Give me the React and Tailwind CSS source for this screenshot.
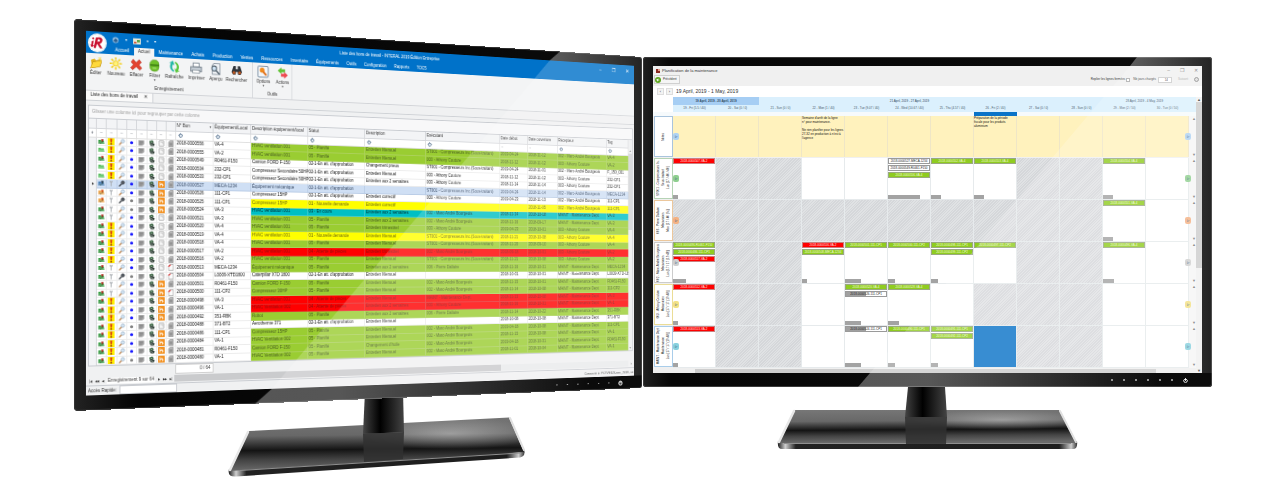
import React from "react";

/* ---------- perspective helper ---------- */

// Homography that maps a w×h box onto four corners (tl, tr, br, bl).
function quadTransform(w, h, [p0, p1, p2, p3]) {
  const [x0, y0] = p0, [x1, y1] = p1, [x2, y2] = p2, [x3, y3] = p3;
  const sx = x0 - x1 + x2 - x3, sy = y0 - y1 + y2 - y3;
  const dx1 = x1 - x2, dx2 = x3 - x2, dy1 = y1 - y2, dy2 = y3 - y2;
  const den = dx1 * dy2 - dx2 * dy1;
  const g = (sx * dy2 - dx2 * sy) / den;
  const k = (dx1 * sy - sx * dy1) / den;
  const a = x1 - x0 + g * x1, b = x3 - x0 + k * x3;
  const d = y1 - y0 + g * y1, e = y3 - y0 + k * y3;
  return `matrix3d(${[a / w, d / w, 0, g / w, b / h, e / h, 0, k / h, 0, 0, 1, 0, x0, y0, 0, 1].join(",")})`;
}

/* ---------- work order data ---------- */

const HV1 = "HVAC ventilation 001", HV2 = "HVAC Ventilation 002";
const P = "05 - Planifié", AP = "02-1-En att. d'approbation", ND = "01 - Nouvelle demande", AT = "04 - Attente de pièces";
const EM = "Entretien Mensuel", E2 = "Entretien aux 2 semaines", ET = "Entretien trimestriel", EC = "Entretien correctif";
const ST = "ST001 - Compresseurs Inc.(Sous-traitant)", MB = "002 - Marc-André Bourgeois", AC = "003 - Athony Couture";
const PD = "006 - Pierre Dallaire", MD = "MAINT - Maintenance Dept.";

// last field: one letter each for box, priority, search, dot, feed and file icons
const ROWS = [
  ["556", "VA-4", "g", HV1, P, EM, ST, "2019-04-24", "2018-11-12", MB, "VA-4", "r!mb--"],
  ["555", "VA-2", "g", HV1, P, EM, AC, "2018-11-12", "2018-11-12", AC, "VA-2", "f!mb--"],
  ["549", "R0461-F150", "w", "Camion FORD F-150", AP, "Changement pneus", ST, "2019-04-24", "2018-11-01", MB, "F_150_001", "r!mb--"],
  ["534", "232-CP1", "w", "Compresseur Secondaire 50HP", AP, EM, AC, "2018-11-12", "2018-11-12", AC, "232-CP1", "f!mb--"],
  ["533", "232-CP1", "w", "Compresseur Secondaire 50HP", AP, E2, AC, "2018-11-14", "2018-11-14", AC, "232-CP1", "f!mb--"],
  ["527", "MECA-1234", "s", "Équipement mécanique", AP, "", ST, "2019-04-24", "2018-11-14", MB, "MECA-1234", "btwbo-"],
  ["526", "111-CP1", "w", "Compresseur 15HP", AP, EC, AC, "2019-04-23", "2018-11-13", MB, "111-CP1", "otmbo-"],
  ["525", "111-CP1", "y", "Compresseur 15HP", ND, EC, "", "", "2018-11-05", MB, "111-CP1", "otwgo-"],
  ["524", "VA-3", "c", HV1, "03 - En cours", E2, MB, "2018-11-14", "2018-10-18", MD, "VA-3", "rtmgo-"],
  ["521", "VA-3", "g", HV1, P, E2, MB, "2018-11-16", "2018-09-17", MD, "VA-3", "rtmb--"],
  ["520", "VA-4", "g", HV1, P, ET, AC, "2019-04-23", "2018-10-01", AC, "VA-4", "r!mb--"],
  ["519", "VA-4", "y", HV1, ND, EM, ST, "2018-11-21", "2018-10-08", AC, "VA-4", "r!mb--"],
  ["518", "VA-4", "g", HV1, P, EM, ST, "2018-11-20", "2018-09-10", AC, "VA-4", "r!mb--"],
  ["517", "VA-2", "r", HV1, AT, ET, MB, "2018-09-18", "2018-10-01", AC, "VA-2", "r!mb--"],
  ["516", "VA-2", "g", HV1, P, EM, ST, "2018-11-21", "2018-10-08", AC, "VA-2", "r!mb--"],
  ["513", "MECA-1234", "g", "Équipement mécanique", P, E2, PD, "2018-11-16", "2018-10-31", MD, "MECA-1234", "rtmb-x"],
  ["504", "L0009-XTD1800", "w", "Caterpillar XTD 1800", AP, EM, "", "2018-10-01", "2018-10-01", MD, "L0009-XTD-18", "rtwg-x"],
  ["501", "R0461-F150", "g", "Camion FORD F-150", P, EM, MB, "2018-11-15", "2018-10-01", MD, "R0461-F150", "rtmbo-"],
  ["500", "111-CP2", "g", "Compresseur 30HP", P, EM, MB, "2018-11-14", "2018-10-08", MD, "111-CP2", "rtmbox"],
  ["498", "VA-3", "r", HV1, AT, EM, MD, "2018-11-13", "2018-10-08", MD, "VA-3", "r!mbo-"],
  ["496", "VA-1", "r", HV2, AT, E2, AC, "2018-11-16", "2018-10-31", MD, "VA-1", "r!mbo-"],
  ["492", "351-RBK", "g", "Robot", P, E2, PD, "2018-11-14", "2018-10-22", MD, "351-RBK", "r!mbo-"],
  ["488", "371-BT2", "w", "Aerotherme 371", AP, EM, "", "2018-10-08", "2018-10-08", MD, "371-BT2", "r!mg--"],
  ["486", "111-CP1", "g", "Compresseur 15HP", P, EM, MB, "2019-04-18", "2018-10-08", MD, "111-CP1", "r!mbo-"],
  ["484", "VA-1", "g", HV2, P, EM, MB, "2018-11-15", "2018-10-08", MD, "VA-1", "r!mbo-"],
  ["481", "R0461-F150", "g", "Camion FORD F-150", P, "Changement d'huile", MB, "2019-04-18", "2018-10-31", MD, "R0461-F150", "r!mbo-"],
  ["480", "VA-1", "g", HV2, P, EM, MB, "2018-11-01", "2018-10-04", MD, "VA-1", "r!mgo-"],
];

const TONE = {
  g: "bg-[#9acd32] text-[#4a5f22] border-[#abd15a]",
  w: "bg-white text-[#111111] border-[#ececec]",
  s: "bg-[#cfdff4] text-[#3a4c66] border-[#b9cce6]",
  y: "bg-[#ffff00] text-[#6d6a10] border-[#f2ee4a]",
  c: "bg-[#00bfc4] text-[#022a2c] border-[#40cbce]",
  r: "bg-[#ff0000] text-[#8f0d0d] border-[#e82a2a]",
};

const COLS = [15, 20, 21, 21, 20, 21, 20, 20, 20, 81, 82, 127, 133, 146, 185, 72, 78, 133, 60];
const HEADS = ["N° Bon", "Équipement/Local", "Description équipement/local", "Statut", "Description", "Exécutant", "Date début", "Date ouverture", "Récepteur", "Tag"];

/* ---------- grid icons ---------- */

const ICON = "mx-auto block size-[14px]";

function BoxIcon({ kind }) {
  const fill = { r: "#2f9a3c", f: "#4dbb55", b: "#3f78b4", o: "#f0a040" }[kind];
  return (
    <svg viewBox="0 0 14 14" className={ICON}>
      <path d="M1 4h4l1 1h6l1 7H1z" fill={fill} />
      <path d="M2 7h11l-1 5H2z" fill="#ffffff" opacity="0.28" />
      {kind !== "f" && <path d="M7 2l5 1-3 5-2-2z" fill={kind === "o" ? "#d9480f" : kind === "b" ? "#23364a" : "#b02418"} />}
      {kind !== "f" && <path d="M3 9l3 2 5-5" stroke="#123c18" strokeWidth="1.4" fill="none" opacity="0.7" />}
    </svg>
  );
}
function PriorityIcon({ kind }) {
  if (kind === "!")
    return (
      <svg viewBox="0 0 14 14" className={ICON}>
        <rect width="14" height="14" fill="#ffee00" />
        <path d="M5 1h4l-1 8H6z" fill="#d01818" />
        <circle cx="7" cy="11.5" r="1.7" fill="#7d1010" />
      </svg>
    );
  return (
    <svg viewBox="0 0 14 14" className={ICON}>
      <path d="M4 1v3l2 2v7h2V6l2-2V1L8 3H6z" fill="#a9adb2" />
    </svg>
  );
}
function SearchIcon({ kind }) {
  return (
    <svg viewBox="0 0 14 14" className={ICON}>
      <path d="M2 12l4-4" stroke={kind === "w" ? "#3b4046" : "#b9824f"} strokeWidth="2.4" strokeLinecap="round" />
      <circle cx="9" cy="5" r="3.4" fill={kind === "w" ? "#555b62" : "#dcecf8"} stroke={kind === "w" ? "#3b4046" : "#7f9cb8"} strokeWidth="1.2" />
    </svg>
  );
}
function DotIcon({ kind }) {
  return (
    <svg viewBox="0 0 14 14" className={ICON}>
      <circle cx="7" cy="7.5" r="3.2" fill={kind === "b" ? "#1414ff" : "#808080"} />
    </svg>
  );
}
function NoteIcon() {
  return (
    <svg viewBox="0 0 14 14" className={ICON}>
      <path d="M1 2h12v8l-4 3H1z" fill="#a6a6a6" />
      <path d="M3 5h8M3 7.500h8M3 10h5" stroke="#707070" strokeWidth="1" />
    </svg>
  );
}
function GlobeIcon() {
  return (
    <svg viewBox="0 0 14 14" className={ICON}>
      <path d="M2 3l6-2 3 4-5 3-4-1z" fill="#24522d" />
      <path d="M2 8l6-2 5 3-2 4H5z" fill="#2c3a33" />
      <path d="M5 9l4 2M4 4l4 1" stroke="#e8f2e8" strokeWidth="1.3" />
    </svg>
  );
}
function FeedIcon({ kind }) {
  if (kind === "o")
    return (
      <svg viewBox="0 0 14 14" className={ICON}>
        <rect width="14" height="14" rx="1" fill="#f39222" />
        <path d="M4 3v8M4 7h5v4M7 4l4 5" stroke="#ffffff" strokeWidth="1.5" fill="none" />
      </svg>
    );
  return (
    <svg viewBox="0 0 14 14" className={ICON}>
      <rect x="2" y="1.500" width="10" height="11" rx="1" fill="#f6f6f6" stroke="#9a9a9a" strokeWidth="1.3" />
      <path d="M5 4.500h5v4" stroke="#aaaaaa" fill="none" />
    </svg>
  );
}
function FileIcon({ kind }) {
  return (
    <svg viewBox="0 0 14 14" className={ICON}>
      <path d="M2 4l3-3h7v12H2z" fill={kind === "x" ? "#fbfbfb" : "#b9b9b9"} stroke="#7c7c7c" />
      {kind === "x" ? <path d="M1 5l4-4 2 1-4 4z" fill="#e01010" /> : <path d="M4 6h6M4 8h6M4 10h6" stroke="#666666" />}
    </svg>
  );
}
function Clock() {
  return (
    <svg viewBox="0 0 12 12" className="block size-[11px]">
      <circle cx="6" cy="6" r="3.600" fill="#e9f1f8" stroke="#55708c" strokeWidth="1.6" />
      <path d="M6 0v3M6 9v3M0 6h3M9 6h3" stroke="#55708c" strokeWidth="1.2" />
    </svg>
  );
}

/* ---------- ribbon ---------- */

const RIBBON = {
  folder: <><path d="M2 7l7-2 3 3 9-3v14L4 23z" fill="#e2b31c" /><path d="M1 23l5-12 18-4-5 13z" fill="#ffd93b" stroke="#b68a10" /><path d="M15 3l7-2-1 6z" fill="#f6e27a" /></>,
  sun: <><circle cx="12" cy="12" r="5" fill="#fff27a" stroke="#f0c818" strokeWidth="1.5" /><path d="M12 0v5M12 19v5M0 12h5M19 12h5M3.500 3.500l3.500 3.500M17 17l3.500 3.500M3.500 20.500L7 17M17 7l3.500-3.500" stroke="#f4cf1c" strokeWidth="3" /></>,
  cross: <path d="M6 2l6 6 6-6 4 5-5 5 6 6-4 4-7-6-7 6-4-4 6-6-5-5z" fill="#e4432f" stroke="#b92b1d" />,
  filter: <><rect x="3" y="1" width="18" height="22" rx="8" fill="#6fbf2a" stroke="#4c931a" /><path d="M3 11h18" stroke="#3c7a12" strokeWidth="3" /><path d="M8 17h8" stroke="#b8e58c" strokeWidth="2" /></>,
  refresh: <><path d="M10 22C3 19 1 11 5 5L1 5l8-5 3 9-3-2c-3 5-2 10 3 13z" fill="#22b7a6" /><path d="M14 2c7 3 9 11 5 17l4 0-8 5-3-9 3 2c3-5 2-10-3-13z" fill="#5cc63c" /></>,
  printer: <><path d="M6 2h12v8H6z" fill="#ffffff" stroke="#667380" strokeWidth="1.5" /><path d="M1 10h22v9H1z" fill="#c4ccd4" stroke="#5f6b77" strokeWidth="1.5" /><path d="M5 16h14v6H5z" fill="#fafafa" stroke="#5f6b77" /></>,
  preview: <><path d="M8 1h13v22H5V5z" fill="#eef1f4" stroke="#7c8894" strokeWidth="1.5" /><circle cx="9" cy="11" r="5" fill="#cfe4f5" stroke="#56646f" strokeWidth="2" /><path d="M13 15l7 7" stroke="#56646f" strokeWidth="3" /></>,
  binoculars: <><path d="M5 4h5v6h4V4h5l4 12-3 5h-5l-2-6h-2l-2 6H4l-3-5z" fill="#30353b" /><circle cx="6" cy="17" r="3" fill="#c2571e" /><circle cx="18" cy="17" r="3" fill="#c2571e" /></>,
  options: <><rect x="1" y="1" width="22" height="22" rx="3" fill="#f4f7fa" stroke="#7f93a8" strokeWidth="2" /><circle cx="10" cy="9" r="5" fill="#f18a1d" /><path d="M12 12l7 7" stroke="#e0701a" strokeWidth="4" /></>,
  actions: <><path d="M1 8l8-7v4h8v6H9v4z" fill="#62c336" /><path d="M23 17l-8 7v-4H8v-6h7v-4z" fill="#ee4a50" /></>,
};

function RibbonButton({ icon, label, width, menu }) {
  return (
    <button type="button" className={`flex h-[56px] flex-col items-center pt-[6px] ${width}`}>
      <svg viewBox="0 0 24 24" className="block size-[25px]">{RIBBON[icon]}</svg>
      <span className="mt-[3px] block leading-[10px]">{label}</span>
      {menu && <span className="block text-[6px] leading-[8px]">▼</span>}
    </button>
  );
}

const TABS = ["Accueil", "Actuel", "Maintenance", "Achats", "Production", "Ventes", "Ressources", "Inventaire", "Équipements", "Outils", "Configuration", "Rapports", "TOC5"];

function WorkOrders() {
  return (
    <div className="flex h-full flex-col overflow-hidden bg-[#f0f1f2] text-[9px] leading-[12px] text-[#333333]">
      <div className="relative bg-[#0072c9] text-white">
        <div className="flex h-[28px] items-center pr-[14px]">
          <div className="flex flex-1 items-center gap-[12px] pl-[52px] text-[7px]">
            <svg viewBox="0 0 16 14" className="block h-[14px] w-[16px]"><circle cx="8" cy="7" r="6" fill="#9fc6e6" /><path d="M3 9l5-6 5 5-4 4z" fill="#2a5f90" /></svg>
            <span>▾</span>
            <svg viewBox="0 0 16 14" className="block h-[14px] w-[16px]"><rect y="1" width="16" height="12" fill="#e8e8d8" /><path d="M2 8h5v3H2z" fill="#d84a2a" /><path d="M8 4h6v5H8z" fill="#5da648" /></svg>
            <span>▾</span>
            <span>▾</span>
          </div>
          <h1 className="text-[9px]">Liste des bons de travail - INTERAL 2019 Édition Entreprise</h1>
          <div className="flex flex-1 justify-end gap-[28px] text-[11px]">
            <button type="button" aria-label="Réduire">–</button>
            <button type="button" aria-label="Restaurer">❐</button>
            <button type="button" aria-label="Fermer">✕</button>
          </div>
        </div>
        <nav className="flex h-[16px] pl-[50px]">
          {TABS.map((t) => (
            <a key={t} href="#" className={t === "Actuel" ? "bg-[#f4f5f6] px-[9px] leading-[16px] text-[#333333]" : "px-[9px] leading-[16px]"}>{t}</a>
          ))}
        </nav>
        <svg viewBox="0 0 36 36" className="absolute left-[3px] top-[3px] size-[38px]">
          <circle cx="18" cy="18" r="18" fill="#ffffff" />
          <circle cx="18" cy="18" r="16" fill="none" stroke="#e3e3e3" />
          <path d="M7 15l4-1-2 12H6zM10 8a2 2 0 110 4 2 2 0 010-4z" fill="#c8102e" />
          <path d="M15 8c10-3 15 1 12 7-1 3-4 4-5 4l6 9h-5l-6-9 1-3c6 0 8-5 1-5l-4 17h-4z" fill="#c8102e" />
          <path d="M5 22c5 5 9 1 15-6" stroke="#c8102e" strokeWidth="2" fill="none" />
        </svg>
      </div>

      <div className="flex h-[75px] border-b border-[#d2d4d8] bg-[#f3f4f5]">
        <div className="flex flex-col border-r border-[#dadcdf] pr-[8px]">
          <div className="flex">
            <RibbonButton icon="folder" label="Éditer" width="w-[40px]" />
            <RibbonButton icon="sun" label="Nouveau" width="w-[42px]" />
            <RibbonButton icon="cross" label="Effacer" width="w-[42px]" />
            <RibbonButton icon="filter" label="Filtrer" width="w-[34px]" menu />
            <RibbonButton icon="refresh" label="Rafraîche" width="w-[48px]" />
            <RibbonButton icon="printer" label="Imprimer" width="w-[46px]" />
            <RibbonButton icon="preview" label="Aperçu" width="w-[38px]" />
            <RibbonButton icon="binoculars" label="Rechercher" width="w-[52px]" />
          </div>
          <div className="pt-[4px] text-center">Enregistrement</div>
        </div>
        <div className="flex flex-col border-r border-[#dadcdf]">
          <div className="flex">
            <RibbonButton icon="options" label="Options" width="w-[46px]" menu />
            <RibbonButton icon="actions" label="Actions" width="w-[40px]" menu />
          </div>
          <div className="pt-[4px] text-center">Outils</div>
        </div>
      </div>

      <div className="flex h-[21px] border-b border-[#cfd2d6]">
        <div className="flex items-center gap-[12px] border-r border-[#cfd2d6] bg-[#fafafa] px-[9px] text-[#222222]">
          Liste des bons de travail
          <button type="button" aria-label="Fermer l'onglet">✕</button>
        </div>
      </div>

      <div className="mx-[4px] mt-[7px] flex h-[27px] items-center border border-b-0 border-[#c9ccd1] bg-[#f8f8f9] px-[6px] text-[#a0a0a0]">
        Glisser une colonne ici pour regrouper par cette colonne
      </div>

      <div className="mx-[4px] flex border border-[#c9ccd1] bg-white">
        <table className="w-[1275px] table-fixed border-collapse">
          <colgroup>
            {COLS.map((w, i) => <col key={i} style={{ width: w }} />)}
          </colgroup>
          <thead>
            <tr className="h-[18px] bg-[#f3f4f6]">
              {COLS.slice(0, 9).map((_, i) => <td key={i} className="border-b border-r border-[#d5d7db] p-0" />)}
              {HEADS.map((h, i) => (
                <th key={h} className="whitespace-nowrap border-b border-r border-[#d5d7db] px-[2px] py-0 text-left font-normal">
                  {i === 0 ? <span className="flex justify-between">{h}<span className="text-[6px]">▼</span></span> : h}
                </th>
              ))}
            </tr>
            <tr className="h-[18px] bg-white text-[#8a8f96]">
              {COLS.slice(0, 9).map((_, i) => (
                <td key={i} className="border-b border-r border-[#e0e0e0] p-0 text-center">{i === 0 ? "♦" : "–"}</td>
              ))}
              {HEADS.map((h) => (
                <td key={h} className="border-b border-r border-[#e0e0e0] px-[4px] py-0">{h.startsWith("Date") ? "–" : <Clock />}</td>
              ))}
            </tr>
          </thead>
          <tbody>
            {ROWS.map((r) => {
              const [no, eq, tone, ...rest] = r;
              const k = rest[8];
              const sel = tone === "s";
              const plain = sel ? TONE.s : TONE.w;
              const icons = [
                <BoxIcon kind={k[0]} />, <PriorityIcon kind={k[1]} />, <SearchIcon kind={k[2]} />, <DotIcon kind={k[3]} />,
                <NoteIcon />, <GlobeIcon />, <FeedIcon kind={k[4]} />, <FileIcon kind={k[5]} />,
              ];
              return (
                <tr key={no} className="h-[17px]">
                  <td className="border-r border-[#d5d7db] bg-[#f3f4f6] p-0 text-center text-[6px]">{sel ? "▶" : ""}</td>
                  {icons.map((ic, i) => <td key={i} className={`border-b border-r p-0 ${plain}`}>{ic}</td>)}
                  <td className={`whitespace-nowrap border-b border-r px-[2px] py-0 ${plain}`}>2018-0000{no}</td>
                  <td className={`whitespace-nowrap border-b border-r px-[2px] py-0 ${plain}`}>{eq}</td>
                  {rest.slice(0, 8).map((c, i) => (
                    <td key={i} className={`whitespace-nowrap border-b border-r px-[2px] py-0 ${TONE[tone]}`}>{c}</td>
                  ))}
                </tr>
              );
            })}
          </tbody>
        </table>
        <div className="flex flex-1 flex-col items-center bg-[#eeeff0] pt-[20px] text-[7px] text-[#777777]">
          ▲
          <span className="block h-[180px] w-full bg-[#d2d3d5]" />
          <span className="mt-auto">▼</span>
        </div>
      </div>

      <div className="flex h-[20px] pl-[184px]">
        <div className="w-[81px] border border-[#d0d0d0] bg-white px-[4px] text-right leading-[17px]">0 / 64</div>
      </div>
      <div className="flex h-[18px] items-center pl-[6px]">
        <div className="flex w-[176px] items-center justify-between pr-[4px] text-[6px]">
          <span>|◀</span><span>◀◀</span><span>◀</span>
          <span className="whitespace-nowrap bg-white px-[2px] text-[9px]">Enregistrement 9 sur 64</span>
          <span>▶</span><span>▶▶</span><span>▶|</span>
        </div>
        <div className="flex h-[14px] flex-1 bg-[#e9eaec]"><span className="block h-full w-[69%] bg-[#cacbcd]" /></div>
        <span className="w-[16px] text-center">›</span>
      </div>
      <div className="flex flex-1 items-center justify-between border-t border-[#c9ccd1]">
        <label className="flex items-center gap-[6px] whitespace-nowrap pl-[4px]">
          Accès Rapide:
          <input className="h-[17px] w-[120px] border border-[#c9ccd1] bg-white" />
        </label>
        <span className="pr-[2px] text-[8px]">Connecté à: PCTVEILS-ven_2018, se</span>
      </div>
    </div>
  );
}

/* ---------- planner ---------- */

const DAYS = ["19 - Fri (5.5 / 40)", "20 - Sat (0 / 0)", "21 - Sun (0 / 0)", "22 - Mon (1 / 40)", "23 - Tue (9.07 / 40)", "24 - Wed (10.67 / 40)", "25 - Thu (4.57 / 40)", "26 - Fri (2 / 40)", "27 - Sat (0 / 0)", "28 - Sun (0 / 0)", "29 - Mon (2 / 50)", "30 - Tue (0 / 50)"];

const LANES = [
  {
    name: ["ST001 - Compresseurs In..", "Sous-traitant", "Lun [17 / 40 / 40]"], box: "border-[#b5d3b5]", badge: "bg-[#8fcf8f]", off: [1, 2, 8, 9],
    cells: {
      0: { ev: [["r", "2018-0000507-VA-2"]], bar: "w-[5px]" },
      5: { ev: [["w", "2018-0000527-MECA-1234"], ["w", "2018-0000549-R0461-F150"], ["g", "2018-0000556-VA-4"]], bar: "w-[32px]" },
      6: { ev: [["g", "2018-0000552-VA-4"]], bar: "w-[10px]" },
      7: { ev: [["g", "2018-0000553-VA-4"]], bar: "w-[10px]" },
      10: { ev: [["g", "2018-0000554-VA-4"]], bar: "w-[10px]" },
    },
  },
  {
    name: ["006 - Pierre Dallaire", "Mécanicien", "Mon [17 / 40 (%)]"], box: "border-[#ecc79c]", badge: "bg-[#f4b183]", off: [0, 1, 2, 3, 4, 5, 6, 7, 8, 9],
    cells: { 10: { ev: [["g", "2018-0000551-VA-4"]], bar: "w-[10px]" } },
  },
  {
    name: ["002 - Marc-André Bourgeois", "Mécanicien", "Lun [17 / 17 (19.48)]"], box: "border-[#cccccc]", badge: "bg-[#cfcfcf]", off: [1, 2, 8, 9],
    cells: {
      0: { ev: [["g", "2018-0000486-R0461-F150"], ["g", "2018-0000486-111-CP1"], ["r", "2018-0000517-VA-2"]], bar: "w-[13px]" },
      3: { ev: [["r", "2018-0000516-VA-2"], ["g", "2018-0000508-MECA-1234"]], bar: "w-[5px]" },
      4: { ev: [["g", "2018-0000501-111-CP1"]], bar: "w-[16px]" },
      5: { ev: [["g", "2018-0000500-111-CP2"]], bar: "w-[7px]" },
      6: { ev: [["g", "2018-0000498-111-CP1"], ["g", "2018-0000499-111-CP2"]], bar: "w-[7px]" },
      7: { ev: [["g", "2018-0000497-111-CP2"]] },
      10: { ev: [["g", "2018-0000496-VA-4"]], bar: "w-[11px]" },
    },
  },
  {
    name: ["003 - Athony Couture", "Mécanicien", "Lun [17 / 17 (19.48)]"], box: "border-[#ebdd96]", badge: "bg-[#f3e184]", off: [1, 2, 7, 8, 9],
    cells: {
      0: { ev: [["r", "2018-0000512-VA-2"]], bar: "w-[5px]" },
      4: { ev: [["g", "2018-0000520-VA-4"], ["h", "2018-0000526-111-CP1"]], bar: "w-[16px]" },
      5: { ev: [["g", "2018-0000528-VA-4"]], bar: "w-[11px]" },
    },
  },
  {
    name: ["MAINT - Maintenance Dept", "Maintenance", "Lun [17 / 17 (19.48)]"], box: "border-[#a9cdea]", badge: "bg-[#87d0de]", off: [1, 2, 8, 9],
    cells: {
      0: { ev: [["r", "2018-0000513-VA-2"]], bar: "w-[5px]" },
      4: { ev: [["h", "2018-0000524-111-CP1"]], bar: "w-[16px]" },
      5: { ev: [["g", "2018-0000490-111-CP1"]], bar: "w-[7px]" },
      6: { ev: [["g", "2018-0000491-111-CP1"], ["g", "2018-0000492-111-CP2"]], bar: "w-[7px]" },
      7: { ev: [], solid: true },
    },
  },
];

const EVENT = {
  r: "border-[#c98080] bg-[#ff0000] text-[#ffe0e0]",
  g: "border-[#9aa880] bg-[#8fcc20] text-[#f0fbd8]",
  w: "border-[#9a9a9a] bg-white text-[#222222]",
  h: "border-[#9a9a9a] bg-linear-to-r from-[#a0a0a0] from-50% to-white to-50% text-[#222222]",
};

function Badge({ color, side }) {
  return (
    <span className={`absolute top-[17px] z-10 block h-[7px] w-[6px] rounded-[2px] text-center text-[5px] leading-[7px] text-[#4a6a8a] ${color} ${side}`}>▹</span>
  );
}

function Lane({ name, box, badge, children }) {
  return (
    <div className="flex h-[42px]">
      <div className={`mb-px ml-px flex w-[19px] items-center justify-center border bg-white ${box}`}>
        <div className="rotate-180 text-center text-[3px] leading-[5px] text-[#222222] [writing-mode:vertical-rl]">
          {name.map((n) => <div key={n} className="whitespace-nowrap">{n}</div>)}
        </div>
      </div>
      <div className="relative flex flex-1">
        <Badge color={badge} side="left-0" />
        <div className="grid flex-1 grid-cols-12">{children}</div>
        <Badge color={badge} side="-right-[2px]" />
      </div>
      <div className="flex w-[7px] flex-col items-end justify-between bg-[#f6f6f6] py-px text-[4px] leading-[4px] text-[#777777]"><span>▲</span><span>▼</span></div>
    </div>
  );
}

function Planner() {
  return (
    <div className="flex h-full flex-col overflow-hidden bg-[#f0f0f0] text-[3px] leading-[5px] text-[#333333]">
      <div className="flex h-[9px] items-center justify-between pl-[3px] pr-[4px]">
        <h2 className="flex items-center gap-[2px] text-[4px]">
          <svg viewBox="0 0 8 8" className="block size-[4px]"><path d="M0 0h8v8H0z" fill="#8a2a22" /><path d="M4 0h4v4H4z" fill="#e5a090" /></svg>
          Planification de la maintenance
        </h2>
        <div className="flex gap-[10px] text-[5px] text-[#777777]">
          <button type="button" aria-label="Réduire">–</button>
          <button type="button" aria-label="Restaurer">❐</button>
          <button type="button" aria-label="Fermer">✕</button>
        </div>
      </div>
      <div className="flex h-[11px] items-start justify-between pl-px pr-[3px]">
        <button type="button" className="flex h-[9px] items-center gap-[2px] border border-[#d0d0d0] bg-[#f5f5f5] pr-[2px]">
          <svg viewBox="0 0 10 10" className="block size-[6px]"><circle cx="5" cy="5" r="5" fill="#5da51f" /><path d="M7 5H3M5 3L3 5l2 2" stroke="#ffffff" strokeWidth="1.5" fill="none" /></svg>
          Précédent
        </button>
        <div className="flex h-[9px] items-center gap-[3px]">
          <label className="flex items-center gap-px">Replier les lignes fermées
            <input type="checkbox" className="block size-[4px] appearance-none border border-[#aaaaaa] bg-white" />
          </label>
          <label className="flex items-center gap-[2px]">Nb jours chargés
            <input defaultValue="14" className="block h-[6px] w-[14px] border border-[#cccccc] bg-white pr-[3px] text-right" />
          </label>
          <button type="button" className="ml-[3px] pr-[3px] text-[#aaaaaa]">Suivant</button>
          <svg viewBox="0 0 10 10" className="block size-[5px]"><circle cx="5" cy="5" r="4" fill="#dddddd" stroke="#777777" strokeWidth="1.5" /></svg>
        </div>
      </div>
      <div className="flex h-[11px] items-center bg-white pl-[4px] text-[5px] text-[#333333]">
        <button type="button" aria-label="Semaine précédente" className="block h-[7px] w-[7px] border border-[#dddddd] bg-[#f3f3f3] text-[4px] leading-[5px]">‹</button>
        <button type="button" aria-label="Semaine suivante" className="ml-[2px] block h-[7px] w-[7px] border border-[#dddddd] bg-[#f3f3f3] text-[4px] leading-[5px]">›</button>
        <span className="ml-[3px]">19 April, 2019 - 1 May, 2019</span>
      </div>
      <div className="flex flex-1">
        <div className="flex flex-1 flex-col">
          <div className="flex h-[15px]">
            <div className="w-[20px] bg-white" />
            <div className="flex flex-1 flex-col bg-[#dbf0fd]">
              <div className="grid h-[8px] grid-cols-12 text-center leading-[8px] text-[#33475b]">
                <div className="col-span-2 bg-[#a6cef4] font-bold">19 April, 2019 - 20 April, 2019</div>
                <div className="col-span-7">21 April, 2019 - 27 April, 2019</div>
                <div className="col-span-3 pl-[40px]">28 April, 2019 - 4 May, 2019</div>
              </div>
              <div className="grid grid-cols-12 text-center leading-[6px] text-[#4a5c6c]">
                {DAYS.map((d) => <div key={d} className="whitespace-nowrap">{d}</div>)}
              </div>
            </div>
            <div className="w-[7px] bg-[#dbf0fd]" />
          </div>
          <div className="flex h-[4px] bg-[#f6fafc] pl-[20px] pr-[7px]">
            <div className="grid flex-1 grid-cols-12"><div className="col-start-8 bg-[#0a73c8]" /></div>
          </div>
          <Lane name={["Notes"]} box="border-[#a9c4dd] bg-[#fff2bf]" badge="bg-[#aed2f2]">
            {DAYS.map((d, i) => (
              <div key={d} className="mb-px border-r border-[#efe6c6] bg-[#fff2bd] leading-[4px] text-[#111111]">
                {i === 3 && <p>Semaine d'arrêt de la ligne<br />n° pour maintenance.<br /><br />Ne rien planifier pour les lignes 27-32 en production à n'est à l'agence</p>}
                {i === 7 && <p>Préparation de la période fiscale pour les produits aluminium</p>}
              </div>
            ))}
          </Lane>
          {LANES.map((lane) => (
            <Lane key={lane.name[0]} {...lane}>
              {DAYS.map((d, i) => {
                const cell = lane.cells[i];
                const bg = cell?.solid
                  ? "bg-[#0a73c8]"
                  : lane.off.includes(i)
                    ? "bg-[repeating-linear-gradient(135deg,#d5d7da_0px,#d5d7da_1px,#e0e2e4_1px,#e0e2e4_2px)]"
                    : "bg-white";
                return (
                  <div key={d} className={`flex min-w-0 flex-col gap-px border-b border-r border-[#e6eaec] ${bg}`}>
                    {cell?.ev.map(([tone, text]) => (
                      <div key={text} className={`h-[6px] whitespace-nowrap border text-center leading-[4px] ${EVENT[tone]}`}>{text}</div>
                    ))}
                    {cell?.bar && <span className={`mt-auto block h-[4px] bg-[#a3a3a3] ${cell.bar}`} />}
                  </div>
                );
              })}
            </Lane>
          ))}
          <div className="flex h-[5px] items-center bg-[#efefef] pl-[42px] pr-[40px]">
            <span className="block h-[4px] flex-1 bg-[#cdcdcd]" />
          </div>
        </div>
        <div className="flex w-[6px] flex-col items-center bg-[#f0f0f0] text-[4px] leading-[5px]">
          ▲
          <span className="block h-[166px] w-full bg-[#cdcdcd]" />
          <span className="mt-auto">▼</span>
        </div>
      </div>
    </div>
  );
}

/* ---------- hardware ---------- */

function Stand({ id, className, viewBox, neck, mirror, top, shade, rim, left, right }) {
  return (
    <svg viewBox={viewBox} className={className} aria-hidden="true">
      <defs>
        <linearGradient id={`${id}-neck`} x1="0" x2="1" y1="0" y2="0">
          <stop offset="0" stopColor="#454545" /><stop offset="0.15" stopColor="#2a2a2a" />
          <stop offset="0.42" stopColor="#000000" /><stop offset="0.75" stopColor="#262626" /><stop offset="1" stopColor="#444444" />
        </linearGradient>
        <linearGradient id={`${id}-top`} x1="0" x2="0.06" y1="0" y2="1">
          <stop offset="0" stopColor="#777777" /><stop offset="0.35" stopColor="#686868" />
          <stop offset="0.62" stopColor="#141414" /><stop offset="0.8" stopColor="#444444" /><stop offset="1" stopColor="#6a6a6a" />
        </linearGradient>
        <radialGradient id={`${id}-glow`} cx="0.75" cy="0.3" r="0.3">
          <stop offset="0" stopColor="#ffffff" stopOpacity="0.35" /><stop offset="1" stopColor="#ffffff" stopOpacity="0" />
        </radialGradient>
        <linearGradient id={`${id}-rim`} x1="0" x2="1" y1="0" y2="0">
          <stop offset="0" stopColor="#1a1a1a" /><stop offset="0.025" stopColor="#cfcfcf" /><stop offset="0.06" stopColor="#222222" />
          <stop offset="0.94" stopColor="#1d1d1d" /><stop offset="0.98" stopColor="#cccccc" /><stop offset="1" stopColor="#333333" />
        </linearGradient>
      </defs>
      <path d={rim} fill={`url(#${id}-rim)`} />
      <path d={top} fill={`url(#${id}-top)`} />
      <path d={top} fill={`url(#${id}-glow)`} />
      <path d={shade} stroke="#8f8f8f" fill="none" />
      <path d={left} stroke="#e8e8e8" strokeWidth="2.500" fill="none" strokeLinecap="round" />
      <path d={right} stroke="#e0e0e0" strokeWidth="2" fill="none" strokeLinecap="round" />
      <path d={mirror} fill="#303030" opacity="0.85" />
      <path d={neck} fill={`url(#${id}-neck)`} />
    </svg>
  );
}

function Leds({ className, dot, power }) {
  return (
    <div className={className}>
      {[0, 1, 2, 3, 4, 5].map((i) => <span key={i} className={`block rounded-full bg-[#bbbbbb] ${dot}`} />)}
      <svg viewBox="0 0 10 10" className={power}>
        <path d="M3 2.500a3.600 3.600 0 104 0M5 1v4" stroke="#f2f2f2" strokeWidth="2" fill="none" strokeLinecap="round" />
      </svg>
    </div>
  );
}

function Glare({ id, viewBox, screen, frame }) {
  return (
    <svg viewBox={viewBox} preserveAspectRatio="none" className="pointer-events-none absolute inset-0 z-20 block h-full w-full" aria-hidden="true">
      <defs>
        <linearGradient id={id} x1="0.2" x2="0.85" y1="0" y2="0">
          <stop offset="0" stopColor="#ffffff" stopOpacity="0.32" /><stop offset="1" stopColor="#ffffff" stopOpacity="0" />
        </linearGradient>
        <linearGradient id={`${id}t`} x1="0" x2="1" y1="0" y2="0">
          <stop offset="0" stopColor="#ffffff" stopOpacity="0.34" /><stop offset="1" stopColor="#ffffff" stopOpacity="0.1" />
        </linearGradient>
      </defs>
      <path d={screen} fill="#ffffff" opacity="0.19" />
      <path d={frame[0]} fill={`url(#${id}t)`} />
      <path d={frame[1]} fill={`url(#${id})`} />
    </svg>
  );
}

// The tilted panel is laid out at 1344×784 and zoomed to half before projection.
const tilted = quadTransform(672, 392, [[0, 0], [568, 38], [568, 369], [0, 392]]);

export default function App() {
  return (
    <main className="min-h-[488px] bg-white font-['Liberation_Sans',Arial,sans-serif]">
      <div className="mx-auto flex w-fit pl-[6px]">
        <section aria-label="Bons de travail" className="w-[569px] pt-[19px]">
          <div className="relative z-10 h-[372px] w-[568px]">
            <div className="h-[392px] w-[672px] origin-top-left" style={{ transform: tilted }}>
              <div className="relative flex h-[784px] w-[1344px] flex-col rounded-[8px] bg-linear-to-r from-[#232323] via-[#050505] via-10% to-[#0c0c0c] pl-[24px] pr-[22px] pt-[22px] shadow-[inset_0_0_0_2px_#333333] [zoom:0.5]">
                <div className="h-[732px]"><WorkOrders /></div>
                <Leds className="flex flex-1 items-center justify-end gap-[25px] pr-[32px]" dot="size-[3px]" power="block size-[12px]" />
                <Glare
                  id="gl" viewBox="0 0 1344 784"
                  screen="M1093 22H1322V754H418z"
                  frame={["M1120 0H1344V754H1322V22H1093z", "M418 754H1344V784H381z"]}
                />
              </div>
            </div>
          </div>
          <Stand
            id="a" className="relative block h-[97px] w-[568px]" viewBox="74 391 568 97"
            neck="M365 391H403L404 432 363 434z"
            mirror="M363 434L404 432 403 459 364 462z"
            top="M249 431L509 417.500 524 452 230 471z"
            rim="M229 469L524 449Q526 456 520 457.500L236 476.500Q227 477 229 469z"
            shade="M240 470.500L520 453"
            left="M248 432L230 470"
            right="M510 418L524 450"
          />
        </section>
        <section aria-label="Planification" className="w-[569px] pt-[57px]">
          <div className="relative z-10 flex flex-col rounded-[3px] bg-linear-to-r from-[#202020] via-[#070707] via-5% to-[#0c0c0c] pl-[10px] pr-[10px] pt-[9px] shadow-[inset_0_0_0_1px_#3a3a3a]">
            <div className="h-[307px]"><Planner /></div>
            <Leds className="flex h-[14px] items-center justify-end gap-[10px] pr-[14px]" dot="size-[2px]" power="block size-[5px]" />
            <Glare
              id="gr" viewBox="0 0 569 330"
              screen="M487 9H559V316H227z"
              frame={["M494 0H569V316H559V9H487z", "M227 316H569V330H215z"]}
            />
          </div>
          <Stand
            id="b" className="relative block h-[80px] w-[569px]" viewBox="643 387 569 80"
            neck="M908 387H945L947 417H905z"
            mirror="M905 417H947L946 444H906z"
            top="M795 410H1059L1076 443H779z"
            rim="M778 441H1077Q1078 449 1073 449H782Q777 449 778 441z"
            shade="M784 443.500H1071"
            left="M794 411L779 442"
            right="M1060 411L1076 442"
          />
        </section>
      </div>
    </main>
  );
}
